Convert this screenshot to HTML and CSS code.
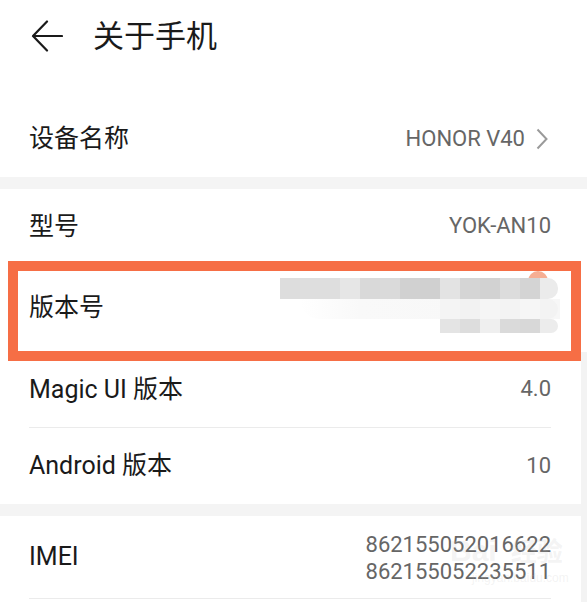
FILE: index.html
```html
<!DOCTYPE html>
<html lang="zh-CN">
<head>
<meta charset="utf-8">
<title>关于手机</title>
<link rel="stylesheet" href="styles.css">
</head>
<body>
<div class="page">
  <header class="header">
    <svg class="back" width="32" height="32" viewBox="0 0 32 32" aria-hidden="true">
      <path d="M31 16H2.5M16 1.5L2 16l14 14.5" fill="none" stroke="#1a1a1a" stroke-width="2.2" stroke-linecap="round" stroke-linejoin="round"/>
    </svg>
    <h1 class="title">关于手机</h1>
  </header>

  <section class="group first">
    <div class="row last">
      <span class="label">设备名称</span>
      <span class="value">HONOR V40<svg class="chev" width="12" height="22" viewBox="0 0 12 22" aria-hidden="true"><path d="M1.5 1.5l9 9.5-9 9.5" fill="none" stroke="#9a9a9a" stroke-width="2"/></svg></span>
    </div>
  </section>

  <div class="band"></div>

  <section class="group">
    <div class="row">
      <span class="label">型号</span>
      <span class="value">YOK-AN10</span>
    </div>
    <div class="row tall">
      <span class="label">版本号</span>
      <div class="mosaic" aria-hidden="true">
        <div class="dot"></div>
        <div class="m-row r1">
          <i style="background:#dddddd"></i><i style="background:#dedede"></i><i style="background:#dedede"></i><i style="background:#e6e6e6"></i><i style="background:#d9d9d9"></i><i style="background:#dadada"></i><i style="background:#d1d1d1"></i><i style="background:#d0d0d0"></i><i style="background:#e3e3e3"></i><i style="background:#d5d5d5"></i><i style="background:#d2d2d2"></i><i style="background:#dcdcdc"></i><i style="background:#d4d4d4"></i><b></b>
        </div>
        <div class="m-row r2">
          <i style="background:#f4f4f4"></i><i style="background:#f2f2f2"></i><i style="background:#f5f5f5"></i><i style="background:#f3f3f3"></i><i style="background:#f6f6f6"></i><b></b>
        </div>
        <div class="m-row r3">
          <i style="background:#e4e4e4"></i><i style="background:#dddddd"></i><i style="background:#efefef"></i><i style="background:#dadada"></i><i style="background:#d8d8d8"></i><b></b>
        </div>
      </div>
    </div>
    <div class="row">
      <span class="label">Magic UI 版本</span>
      <span class="value">4.0</span>
    </div>
    <div class="row last">
      <span class="label">Android 版本</span>
      <span class="value">10</span>
    </div>
  </section>

  <div class="band"></div>

  <section class="group">
    <div class="row imei">
      <span class="label">IMEI</span>
      <span class="value multi">862155052016622<br>862155052235511</span>
    </div>
  </section>

  <div class="highlight" aria-hidden="true"></div>
  <div class="edge" aria-hidden="true"></div>
  <div class="watermark" aria-hidden="true">Bai<span>经验</span><small>jingyan.baidu.com</small></div>
</div>
</body>
</html>
```

FILE: styles.css
```css
* { box-sizing: border-box; }

html, body {
  margin: 0;
  padding: 0;
  background: #ffffff;
}

body {
  font-family: "Roboto", "Noto Sans CJK SC", sans-serif;
  color: #1a1a1a;
  width: 587px;
  height: 602px;
  overflow: hidden;
}

.page {
  position: relative;
  width: 587px;
  height: 602px;
  overflow: hidden;
}

.header {
  display: flex;
  align-items: center;
  height: 72px;
  padding-left: 31px;
  margin-bottom: 29px;
}

.back {
  display: block;
  flex: none;
}

.title {
  margin: 0 0 0 30px;
  font-size: 31px;
  font-weight: 400;
  letter-spacing: 0;
  line-height: 1;
  color: #1a1a1a;
}

.group {
  background: #ffffff;
}

.band {
  height: 12px;
  background: #f4f4f4;
}

.row {
  position: relative;
  display: flex;
  align-items: center;
  justify-content: space-between;
  min-height: 76px;
  margin: 0 36px 0 29px;
  border-bottom: 1px solid #ebebeb;
}

.row.last {
  border-bottom: none;
}

.row.tall {
  min-height: 87px;
}

.label {
  font-size: 25px;
  color: #1a1a1a;
  line-height: 1.2;
}

.value {
  display: flex;
  align-items: center;
  font-size: 22px;
  color: #666666;
  line-height: 1.2;
}

.chev {
  display: block;
  margin-left: 11px;
  margin-right: 3px;
}

.row.imei {
  min-height: 83px;
}

.value.multi {
  display: block;
  text-align: right;
  line-height: 27px;
  padding-top: 2px;
}

/* privacy mosaic over the version number */
.mosaic {
  position: absolute;
  left: 251px;
  top: 13px;
  width: 280px;
  height: 56px;
}

.dot {
  position: absolute;
  left: 248px;
  top: -7px;
  width: 20px;
  height: 20px;
  border-radius: 50%;
  background: #f6ae93;
}

.m-row {
  position: relative;
  display: flex;
}

.m-row i {
  display: block;
  width: 20px;
  height: 100%;
}

.m-row b {
  display: block;
  width: 18px;
  height: 100%;
  border-radius: 0 10px 10px 0;
  background: #ebebeb;
}

.r1 {
  height: 21px;
}

.r2 {
  height: 20px;
  margin-left: 20px;
  padding-left: 140px;
  background: linear-gradient(90deg, rgba(250,250,250,0) 0, #f9f9f9 60px, #f7f7f7 100%);
  border-radius: 0 0 0 30px;
}

.r2 b {
  background: #f3f3f3;
}

.r3 {
  height: 14px;
  margin-left: 160px;
}

.r3 b {
  background: #ececec;
}

/* annotation frame */
.highlight {
  position: absolute;
  left: 8px;
  top: 261px;
  width: 573px;
  height: 100px;
  border: 10px solid #f66e45;
}

.edge {
  position: absolute;
  left: 581px;
  top: 352px;
  width: 6px;
  height: 250px;
  background: #f3f3f3;
}

.watermark {
  position: absolute;
  left: 450px;
  top: 536px;
  font-family: "Liberation Sans", "Noto Sans CJK SC", sans-serif;
  font-size: 30px;
  font-weight: 700;
  color: rgba(190, 190, 190, 0.18);
  line-height: 1;
  white-space: nowrap;
}

.watermark span {
  font-size: 26px;
  margin-left: 14px;
}

.watermark small {
  display: block;
  font-size: 12px;
  font-weight: 400;
  margin-top: 6px;
  margin-left: 22px;
}
```
